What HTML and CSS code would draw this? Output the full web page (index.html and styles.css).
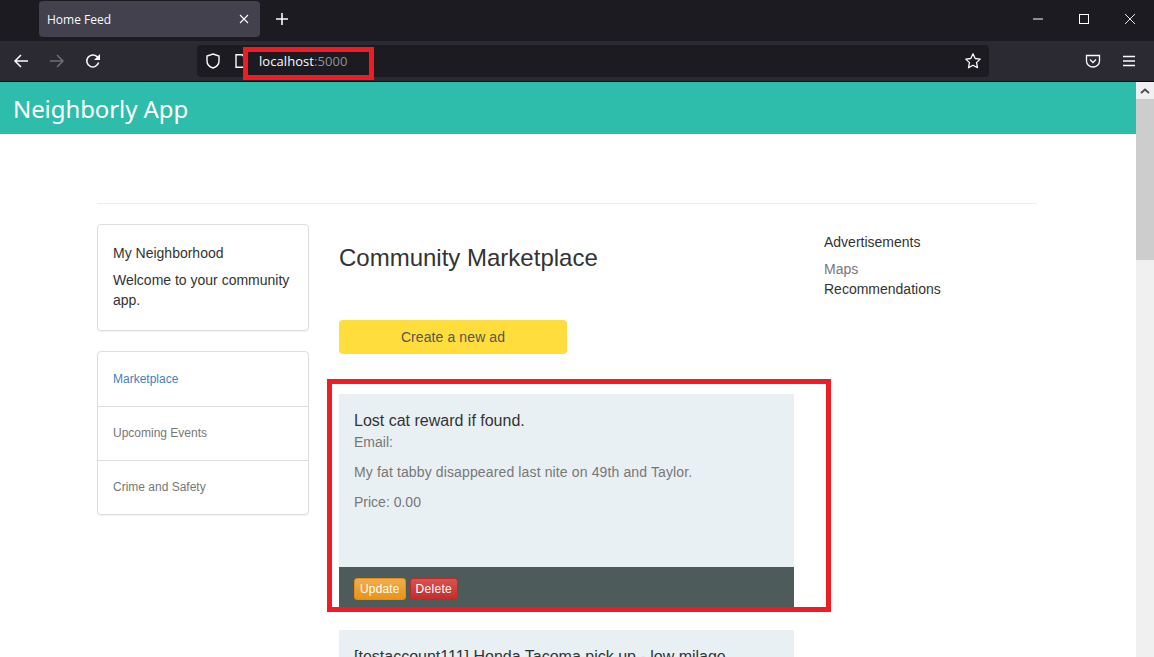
FILE: index.html
```html
<!DOCTYPE html>
<html lang="en">
<head>
  <meta charset="UTF-8">
  <title>Home Feed</title>
  <link rel="stylesheet" href="styles.css">
</head>
<body>

  <!-- Browser tabs -->
  <div class="tabstrip">
    <div class="tab">
      <span class="tab-title">Home Feed</span>
      <svg class="tab-close" width="10" height="10" viewBox="0 0 10 10"><path d="M1 1l8 8M9 1l-8 8" stroke="#fbfbfe" stroke-width="1.1" fill="none"/></svg>
    </div>
    <svg class="new-tab" width="14" height="14" viewBox="0 0 14 14"><path d="M7 1v12M1 7h12" stroke="#fbfbfe" stroke-width="1.6" fill="none"/></svg>
    <div class="window-btns">
      <svg width="12" height="12" viewBox="0 0 12 12"><path d="M1 6h10" stroke="#fff" stroke-width="1" fill="none"/></svg>
      <svg width="12" height="12" viewBox="0 0 12 12"><rect x="1.5" y="1.5" width="9" height="9" stroke="#fff" stroke-width="1" fill="none"/></svg>
      <svg width="12" height="12" viewBox="0 0 12 12"><path d="M1 1l10 10M11 1L1 11" stroke="#fff" stroke-width="0.9" fill="none"/></svg>
    </div>
  </div>

  <!-- Browser toolbar -->
  <div class="toolbar">
    <div class="nav-btns">
      <svg width="16" height="16" viewBox="0 0 16 16"><path d="M15 8H2M8 2L2 8l6 6" stroke="#fbfbfe" stroke-width="1.5" fill="none"/></svg>
      <svg width="16" height="16" viewBox="0 0 16 16"><path d="M1 8h13M8 2l6 6-6 6" stroke="#6f6e75" stroke-width="1.5" fill="none"/></svg>
      <svg width="16" height="16" viewBox="0 0 16 16"><path d="M13.6 9.5A6 6 0 1 1 12 3.6L14 5.5" stroke="#fbfbfe" stroke-width="1.5" fill="none"/><path d="M15 1v6H9z" fill="#fbfbfe"/></svg>
    </div>
    <div class="urlbar">
      <svg class="shield" width="16" height="16" viewBox="0 0 16 16"><path d="M8 1l6 2v5c0 3.500-3 6-6 7-3-1-6-3.500-6-7V3z" stroke="#fbfbfe" stroke-width="1.4" fill="none"/></svg>
      <svg class="page-icon" width="14" height="16" viewBox="0 0 14 16"><path d="M2 1.700h6l4 4V14.300H2z" stroke="#fbfbfe" stroke-width="1.400" fill="none"/></svg>
      <span class="url">localhost<span class="url-port">:5000</span></span>
      <svg class="star" width="18" height="18" viewBox="0 0 18 18"><path d="M9 1.800l2.200 4.700 5 .6-3.700 3.500 1 5.100L9 13.200l-4.500 2.500 1-5.100L1.800 7.100l5-.6z" stroke="#fbfbfe" stroke-width="1.300" stroke-linejoin="round" fill="none"/></svg>
    </div>
    <div class="toolbar-right">
      <svg width="16" height="16" viewBox="0 0 16 16"><path d="M1.500 2.500h13V8a6.500 6 0 0 1-13 0z" stroke="#fbfbfe" stroke-width="1.300" fill="none"/><path d="M5 6.500l3 3 3-3" stroke="#fbfbfe" stroke-width="1.300" fill="none"/></svg>
      <svg width="14" height="14" viewBox="0 0 14 14"><path d="M1 2.500h12M1 7h12M1 11.500h12" stroke="#fbfbfe" stroke-width="1.300" fill="none"/></svg>
    </div>
  </div>

  <div class="viewport">
    <div class="page">
      <header class="app-header">Neighborly App</header>

      <div class="container">
        <hr class="divider">
        <div class="columns">

          <!-- Left column -->
          <aside class="sidebar">
            <div class="panel welcome">
              <p class="welcome-title">My Neighborhood</p>
              <p class="welcome-text">Welcome to your community app.</p>
            </div>
            <ul class="panel side-nav">
              <li class="active"><a href="#">Marketplace</a></li>
              <li><a href="#">Upcoming Events</a></li>
              <li><a href="#">Crime and Safety</a></li>
            </ul>
          </aside>

          <!-- Main column -->
          <main class="feed">
            <h1 class="feed-title">Community Marketplace</h1>
            <a class="create-btn" href="#">Create a new ad</a>

            <div class="ad-card">
              <div class="ad-body">
                <h2 class="ad-title">Lost cat reward if found.</h2>
                <p class="ad-email">Email:</p>
                <p class="ad-desc">My fat tabby disappeared last nite on 49th and Taylor.</p>
                <p>Price: 0.00</p>
              </div>
              <div class="ad-actions">
                <a class="btn btn-update" href="#">Update</a>
                <a class="btn btn-delete" href="#">Delete</a>
              </div>
            </div>

            <div class="ad-card">
              <div class="ad-body">
                <h2 class="ad-title">[testaccount111] Honda Tacoma pick up - low milage</h2>
              </div>
            </div>
          </main>

          <!-- Right column -->
          <aside class="links">
            <p class="links-title">Advertisements</p>
            <a class="link-muted" href="#">Maps</a>
            <a class="link-dark" href="#">Recommendations</a>
          </aside>

        </div>
      </div>
    </div>

    <div class="scrollbar">
      <div class="scroll-up">
        <svg width="10" height="6" viewBox="0 0 10 6"><path d="M1 5l4-3.500L9 5" stroke="#505050" stroke-width="2" fill="none"/></svg>
      </div>
      <div class="scroll-thumb"></div>
    </div>
  </div>

  <!-- Red markup boxes drawn over the screenshot -->
  <div class="markup markup-url"></div>
  <div class="markup markup-card"></div>

</body>
</html>
```

FILE: styles.css
```css
/* General Styles */
html, body {
  margin: 0;
  padding: 0;
  height: 657px;
  overflow: hidden;
  background-color: #fff;
  font-family: "Liberation Sans", Arial, sans-serif;
  font-size: 14px;
  color: #333;
}

a {
  text-decoration: none;
}

/* Browser tabs */
.tabstrip {
  height: 41px;
  background-color: #1c1b22;
  display: flex;
  align-items: center;
  padding: 1px 0 4px 39px;
  box-sizing: border-box;
}

.tab {
  width: 221px;
  height: 36px;
  background-color: #42414d;
  border-radius: 4px;
  display: flex;
  align-items: center;
  justify-content: space-between;
  padding: 0 11px 0 8px;
  box-sizing: border-box;
  color: #fbfbfe;
  font-family: "Open Sans", sans-serif;
  font-size: 12px;
}

.new-tab {
  margin-left: 15px;
}

.window-btns {
  margin-left: auto;
  display: flex;
  gap: 34px;
  padding-right: 18px;
}

/* Browser toolbar */
.toolbar {
  height: 41px;
  background-color: #2b2a33;
  border-bottom: 1px solid #0c0c0d;
  box-sizing: border-box;
  display: flex;
  align-items: center;
}

.nav-btns {
  display: flex;
  gap: 20px;
  padding-left: 13px;
  width: 184px;
  box-sizing: border-box;
}

.urlbar {
  width: 792px;
  height: 32px;
  margin-left: 13px;
  background-color: #1c1b22;
  border-radius: 4px;
  display: flex;
  align-items: center;
  box-sizing: border-box;
  padding: 0 7px 0 8px;
  font-family: "Open Sans", sans-serif;
  font-size: 13px;
  color: #fbfbfe;
}

.page-icon {
  margin-left: 13px;
}

.url {
  margin-left: 11px;
  letter-spacing: 0.06px;
}

.url-port {
  color: #8f8f92;
}

.star {
  margin-left: auto;
}

.toolbar-right {
  margin-left: auto;
  display: flex;
  align-items: center;
  gap: 21px;
  padding-right: 18px;
}

/* Page area */
.viewport {
  display: flex;
  height: 575px;
  overflow: hidden;
}

.page {
  flex: 1;
  min-width: 0;
}

.scrollbar {
  width: 18px;
  background-color: #f0f0f0;
}

.scroll-up {
  height: 17px;
  display: flex;
  align-items: center;
  justify-content: center;
}

.scroll-thumb {
  height: 161px;
  background-color: #cdcdcd;
}

/* Header */
.app-header {
  height: 52px;
  line-height: 53px;
  background-color: #2ebdaa;
  color: #fff;
  padding-left: 13px;
  font-family: "Noto Sans", sans-serif;
  font-size: 24px;
  letter-spacing: -0.08px;
}

/* Layout */
.container {
  width: 940px;
  margin-left: 97px;
  padding-top: 69px;
}

.divider {
  margin: 0 0 20px;
  border: 0;
  border-top: 1px solid #eee;
}

.columns {
  display: grid;
  grid-template-columns: 212px 455px 1fr;
  column-gap: 30px;
}

/* Sidebar */
.panel {
  background-color: #fff;
  border: 1px solid #ddd;
  border-radius: 4px;
  box-shadow: 0 1px 1px rgba(0, 0, 0, 0.05);
  box-sizing: border-box;
}

.welcome {
  height: 107px;
  padding: 18px 15px;
  margin-bottom: 20px;
  line-height: 20px;
}

.welcome p {
  margin: 0;
}

.welcome-title {
  padding-bottom: 7px;
}

.side-nav {
  list-style: none;
  margin: 0;
  padding: 0;
  font-size: 12px;
}

.side-nav li {
  height: 54px;
  line-height: 53px;
  padding-left: 15px;
  border-bottom: 1px solid #ddd;
  box-sizing: border-box;
}

.side-nav li:first-child {
  height: 55px;
  line-height: 54px;
}

.side-nav li:last-child {
  height: 53px;
  border-bottom: 0;
}

.side-nav a {
  color: #777;
}

.side-nav .active a {
  color: #3f7fc4;
}

/* Feed */
.feed-title {
  margin: 21px 0 0;
  height: 26px;
  line-height: 26px;
  font-size: 24px;
  font-weight: 400;
}

.create-btn {
  display: block;
  width: 228px;
  height: 34px;
  line-height: 34px;
  margin-top: 49px;
  background-color: #ffdd3c;
  border-radius: 4px;
  text-align: center;
  color: #555;
  letter-spacing: 0.1px;
}

.ad-card {
  margin-top: 40px;
  background-color: #e9f0f4;
}

.ad-card + .ad-card {
  margin-top: 23px;
}

.ad-body {
  height: 173px;
  padding: 17px 15px 0;
  box-sizing: border-box;
  color: #777;
}

.ad-body p {
  margin: 0 0 10px;
  line-height: 20px;
}

.ad-body .ad-email {
  padding-top: 1px;
  margin-bottom: 10px;
}

.ad-body .ad-desc {
  letter-spacing: 0.13px;
}

.ad-title {
  margin: 0;
  font-size: 16px;
  font-weight: 400;
  line-height: 20px;
  color: #333;
}

.ad-actions {
  height: 40px;
  padding: 11px 15px 0;
  box-sizing: border-box;
  background-color: #4e5b5b;
  display: flex;
  gap: 4px;
  align-items: flex-start;
}

.btn {
  height: 22px;
  line-height: 20px;
  padding: 0 5px;
  box-sizing: border-box;
  border-radius: 3px;
  border: 1px solid;
  font-size: 12px;
  letter-spacing: 0.15px;
  color: #fff;
}

.btn-update {
  background-image: linear-gradient(to bottom, #f0ad4e, #eb9316);
  border-color: #e38d13;
}

.btn-delete {
  background-image: linear-gradient(to bottom, #d9534f, #c12e2a);
  border-color: #b92c28;
  letter-spacing: 0.3px;
}

/* Right column */
.links {
  padding-top: 8px;
  line-height: 20px;
}

.links p {
  margin: 0 0 7px;
}

.links a {
  display: block;
}

.link-muted {
  color: #777;
}

.link-dark {
  color: #333;
}

/* Red markup boxes */
.markup {
  position: absolute;
  border: 5px solid #f01c24;
  box-sizing: border-box;
}

.markup-url {
  left: 243px;
  top: 47px;
  width: 131px;
  height: 33px;
}

.markup-card {
  left: 327px;
  top: 379px;
  width: 504px;
  height: 233px;
}
```
